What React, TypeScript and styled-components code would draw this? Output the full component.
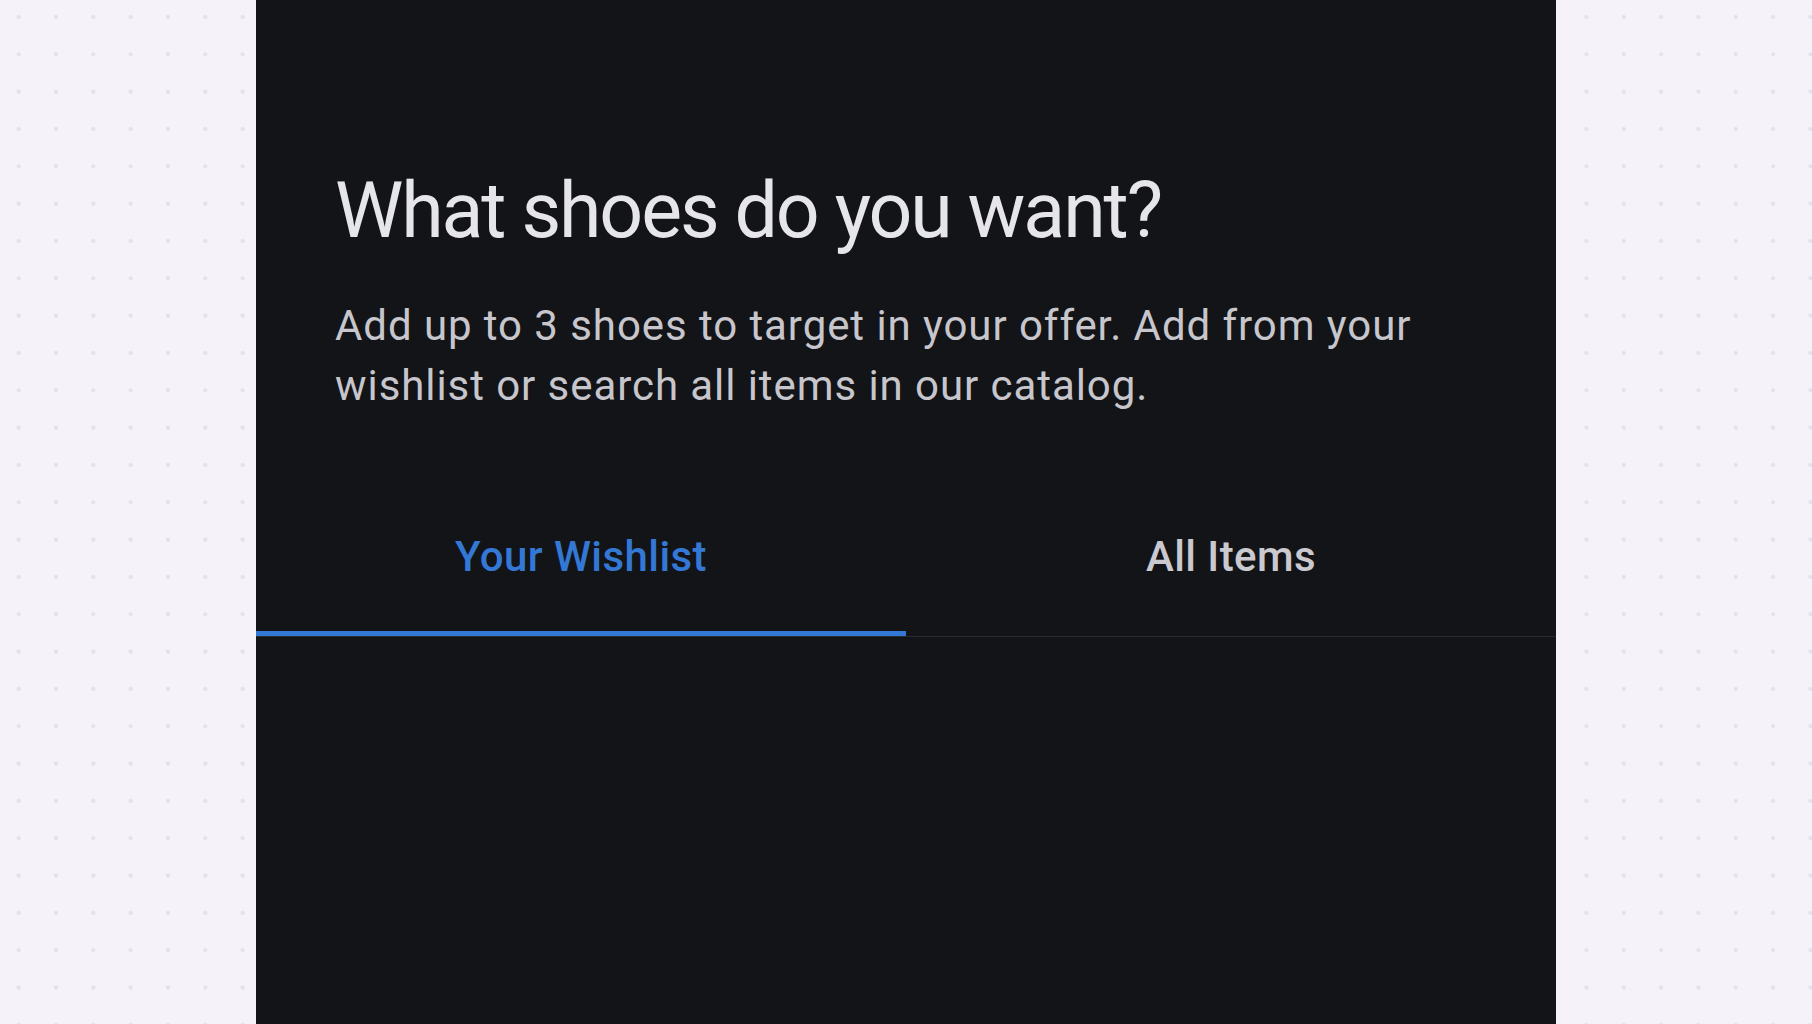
import React, { useState } from "react";
import styled, { createGlobalStyle } from "styled-components";

const GlobalStyle = createGlobalStyle`
  html, body {
    margin: 0;
    padding: 0;
    height: 100%;
  }
  body {
    font-family: Roboto, "Noto Sans", "Liberation Sans", sans-serif;
    background-color: #f6f2fa;
    background-image: radial-gradient(circle, #e3e1ee 0, #e3e1ee 1.7px, rgba(227, 225, 238, 0) 2.4px);
    background-size: 37.333px 37.333px;
    background-position: 0 -1.67px;
    overflow: hidden;
  }
`;

const Page = styled.div`
  display: flex;
  justify-content: center;
  min-height: 100vh;
`;

const Panel = styled.section`
  width: 1300px;
  height: 100vh;
  background: #131418;
  box-sizing: border-box;
  padding-top: 166px;
  display: flex;
  flex-direction: column;
`;

const Header = styled.header`
  padding: 0 80px 0 79px;
`;

const Title = styled.h1`
  margin: 0;
  font-family: Roboto, "Noto Sans", sans-serif;
  font-weight: 400;
  font-size: 77px;
  line-height: 90px;
  letter-spacing: -2.1px;
  color: #e6e5ea;
`;

const Subtitle = styled.p`
  margin: 40px 0 0;
  font-family: Roboto, "Noto Sans", sans-serif;
  font-weight: 400;
  font-size: 42px;
  line-height: 59.5px;
  letter-spacing: 0.93px;
  color: #c7c6cc;
`;

const TabBar = styled.div`
  margin-top: 67px;
  display: grid;
  grid-template-columns: 1fr 1fr;
  border-bottom: 1px solid #2a2b30;
`;

const Tab = styled.button<{ $active: boolean }>`
  appearance: none;
  background: transparent;
  border: none;
  border-bottom: 5px solid ${(p) => (p.$active ? "#3478d6" : "transparent")};
  height: 153.5px;
  padding: 0;
  margin: 0;
  display: flex;
  align-items: center;
  justify-content: center;
  font-family: Roboto, "Noto Sans", sans-serif;
  font-weight: 500;
  font-size: 42px;
  line-height: 59.5px;
  letter-spacing: 0.42px;
  color: ${(p) => (p.$active ? "#3478d6" : "#cac9cf")};
  cursor: pointer;
`;

export default function App() {
  const [tab, setTab] = useState(0);
  return (
    <>
      <GlobalStyle />
      <Page>
        <Panel>
          <Header>
            <Title>What shoes do you want?</Title>
            <Subtitle>
              Add up to 3 shoes to target in your offer. Add from your wishlist or search all items in our catalog.
            </Subtitle>
          </Header>
          <TabBar>
            <Tab $active={tab === 0} onClick={() => setTab(0)}>
              Your Wishlist
            </Tab>
            <Tab $active={tab === 1} onClick={() => setTab(1)}>
              All Items
            </Tab>
          </TabBar>
        </Panel>
      </Page>
    </>
  );
}
